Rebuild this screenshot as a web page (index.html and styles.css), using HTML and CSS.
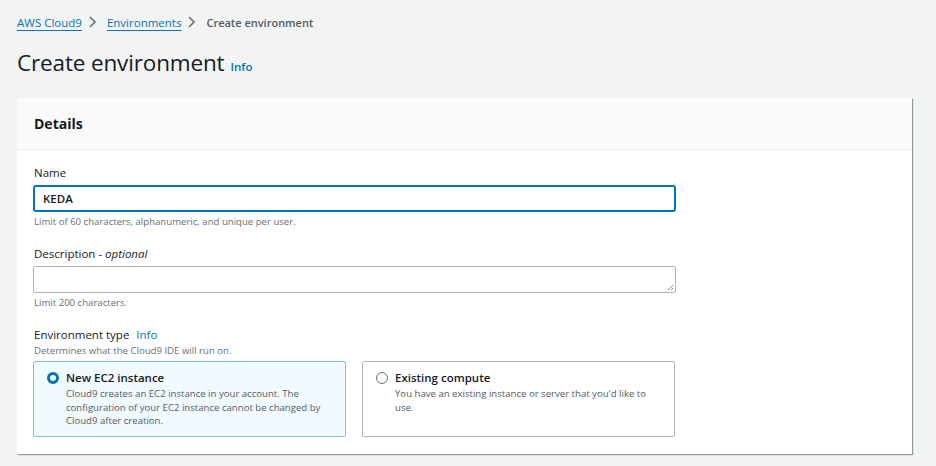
FILE: index.html
```html
<!DOCTYPE html>
<html lang="en">
<head>
<meta charset="utf-8">
<title>Create environment</title>
<link rel="stylesheet" href="styles.css">
</head>
<body>
<nav class="crumbs">
  <a class="crumb-link" href="#">AWS Cloud9</a>
  <svg class="chev" viewBox="0 0 10 14" width="10" height="14"><path d="M3 2l5 5-5 5" fill="none" stroke="#687078" stroke-width="1.6"/></svg>
  <a class="crumb-link" href="#">Environments</a>
  <svg class="chev" viewBox="0 0 10 14" width="10" height="14"><path d="M3 2l5 5-5 5" fill="none" stroke="#687078" stroke-width="1.6"/></svg>
  <span class="crumb-current">Create environment</span>
</nav>
<header class="page-head">
  <h1 class="page-title">Create environment</h1>
  <a class="info" href="#">Info</a>
</header>
<section class="card">
  <div class="card-head"><h2 class="card-title">Details</h2></div>
  <div class="card-body">
    <div class="field">
      <label class="label">Name</label>
      <div class="input focused">KEDA</div>
      <div class="hint">Limit of 60 characters, alphanumeric, and unique per user.</div>
    </div>
    <div class="field">
      <label class="label">Description - <i>optional</i></label>
      <div class="input textarea"><svg class="grip" viewBox="0 0 8 8" width="8" height="8"><path d="M7 2L2 7M7 5L5 7" stroke="#888" stroke-width="1"/></svg></div>
      <div class="hint">Limit 200 characters.</div>
    </div>
    <div class="field">
      <div class="label">Environment type <a class="info info-l" href="#">Info</a></div>
      <div class="hint hint-top">Determines what the Cloud9 IDE will run on.</div>
      <div class="tiles">
        <div class="tile selected">
          <span class="radio on"></span>
          <div class="tile-text">
            <div class="tile-title">New EC2 instance</div>
            <div class="tile-desc">Cloud9 creates an EC2 instance in your account. The configuration of your EC2 instance cannot be changed by Cloud9 after creation.</div>
          </div>
        </div>
        <div class="tile">
          <span class="radio"></span>
          <div class="tile-text">
            <div class="tile-title">Existing compute</div>
            <div class="tile-desc">You have an existing instance or server that you'd like to use.</div>
          </div>
        </div>
      </div>
    </div>
  </div>
</section>
</body>
</html>
```
FILE: styles.css
```css
* { box-sizing: border-box; }
html, body { margin: 0; }
body {
  background: #f2f3f3;
  font-family: "Open Sans", "Noto Sans", Arial, sans-serif;
  color: #16191f;
  padding: 13px 0 0 17px;
  width: 936px;
  height: 466px;
  overflow: hidden;
}
.crumbs {
  display: flex;
  align-items: center;
  height: 18px;
  font-size: 11.5px;
}
.crumb-link {
  color: #0073bb;
  text-decoration: underline;
  text-underline-offset: 3px;
  text-decoration-thickness: 1px;
}
.chev { margin: 0 10px 0 5px; }
.crumb-current { color: #545b64; font-weight: 600; font-size: 11px; }
.page-head {
  display: flex;
  align-items: baseline;
  margin-top: 17px;
  height: 34px;
}
.page-title {
  margin: 0;
  font-size: 22.5px;
  font-weight: 400;
  line-height: 30px;
  letter-spacing: -0.15px;
}
.info {
  color: #0073bb;
  font-size: 11.5px;
  font-weight: 600;
  text-decoration: none;
  margin-left: 6px;
}
.card {
  margin-top: 16px;
  width: 895px;
  background: #fff;
  box-shadow: 1px 1px 1px 0 rgba(0, 28, 36, 0.3), 1px 1px 1px 0 rgba(0, 28, 36, 0.15);
}
.card-head {
  height: 52px;
  background: #fafafa;
  border-bottom: 1px solid #eaeded;
  display: flex;
  align-items: center;
  padding-left: 17px;
}
.card-title {
  margin: 0;
  font-size: 14px;
  font-weight: 700;
}
.card-body {
  padding: 15px 17px 17px 16px;
}
.field { margin-bottom: 17px; }
.field:last-child { margin-bottom: 0; }
.label {
  display: block;
  font-size: 11.5px;
  line-height: 16px;
  padding-left: 1px;
  margin-bottom: 4px;
}
.label i { font-style: italic; }
.info-l { font-weight: 400; font-size: 11.5px; margin-left: 4px; }
.input {
  width: 643px;
  height: 27px;
  border: 1px solid #aab7b8;
  border-radius: 2px;
  font-size: 11.5px;
  line-height: 25px;
  padding-left: 9px;
  font-weight: 600;
  position: relative;
}
.input.focused {
  border: 2px solid #0073bb;
  border-radius: 3px;
  line-height: 23px;
  padding-left: 8px;
}
.grip { position: absolute; right: 1px; bottom: 1px; }
.hint {
  font-size: 9.6px;
  color: #687078;
  line-height: 14px;
  margin-top: 3px;
  padding-left: 1px;
}
.hint-top { margin-top: -3px; margin-bottom: 3px; }
.tiles {
  display: flex;
  gap: 16px;
}
.tile {
  width: 313px;
  height: 76px;
  border: 1px solid #aab7b8;
  border-radius: 2px;
  display: flex;
  gap: 7px;
  padding: 8px 12px 0 13px;
}
.tile.selected {
  background: #f1faff;
  border-color: #7dc3e5;
}
.radio {
  flex: none;
  width: 12px;
  height: 12px;
  border-radius: 50%;
  border: 1.5px solid #687078;
  margin-top: 2px;
}
.radio.on {
  border: 3.5px solid #0073bb;
  background: #fff;
}
.tile-title {
  font-size: 11.5px;
  font-weight: 600;
  line-height: 16px;
}
.tile-desc {
  font-size: 9.6px;
  color: #545b64;
  line-height: 13.5px;
  margin-top: 1px;
}
```
